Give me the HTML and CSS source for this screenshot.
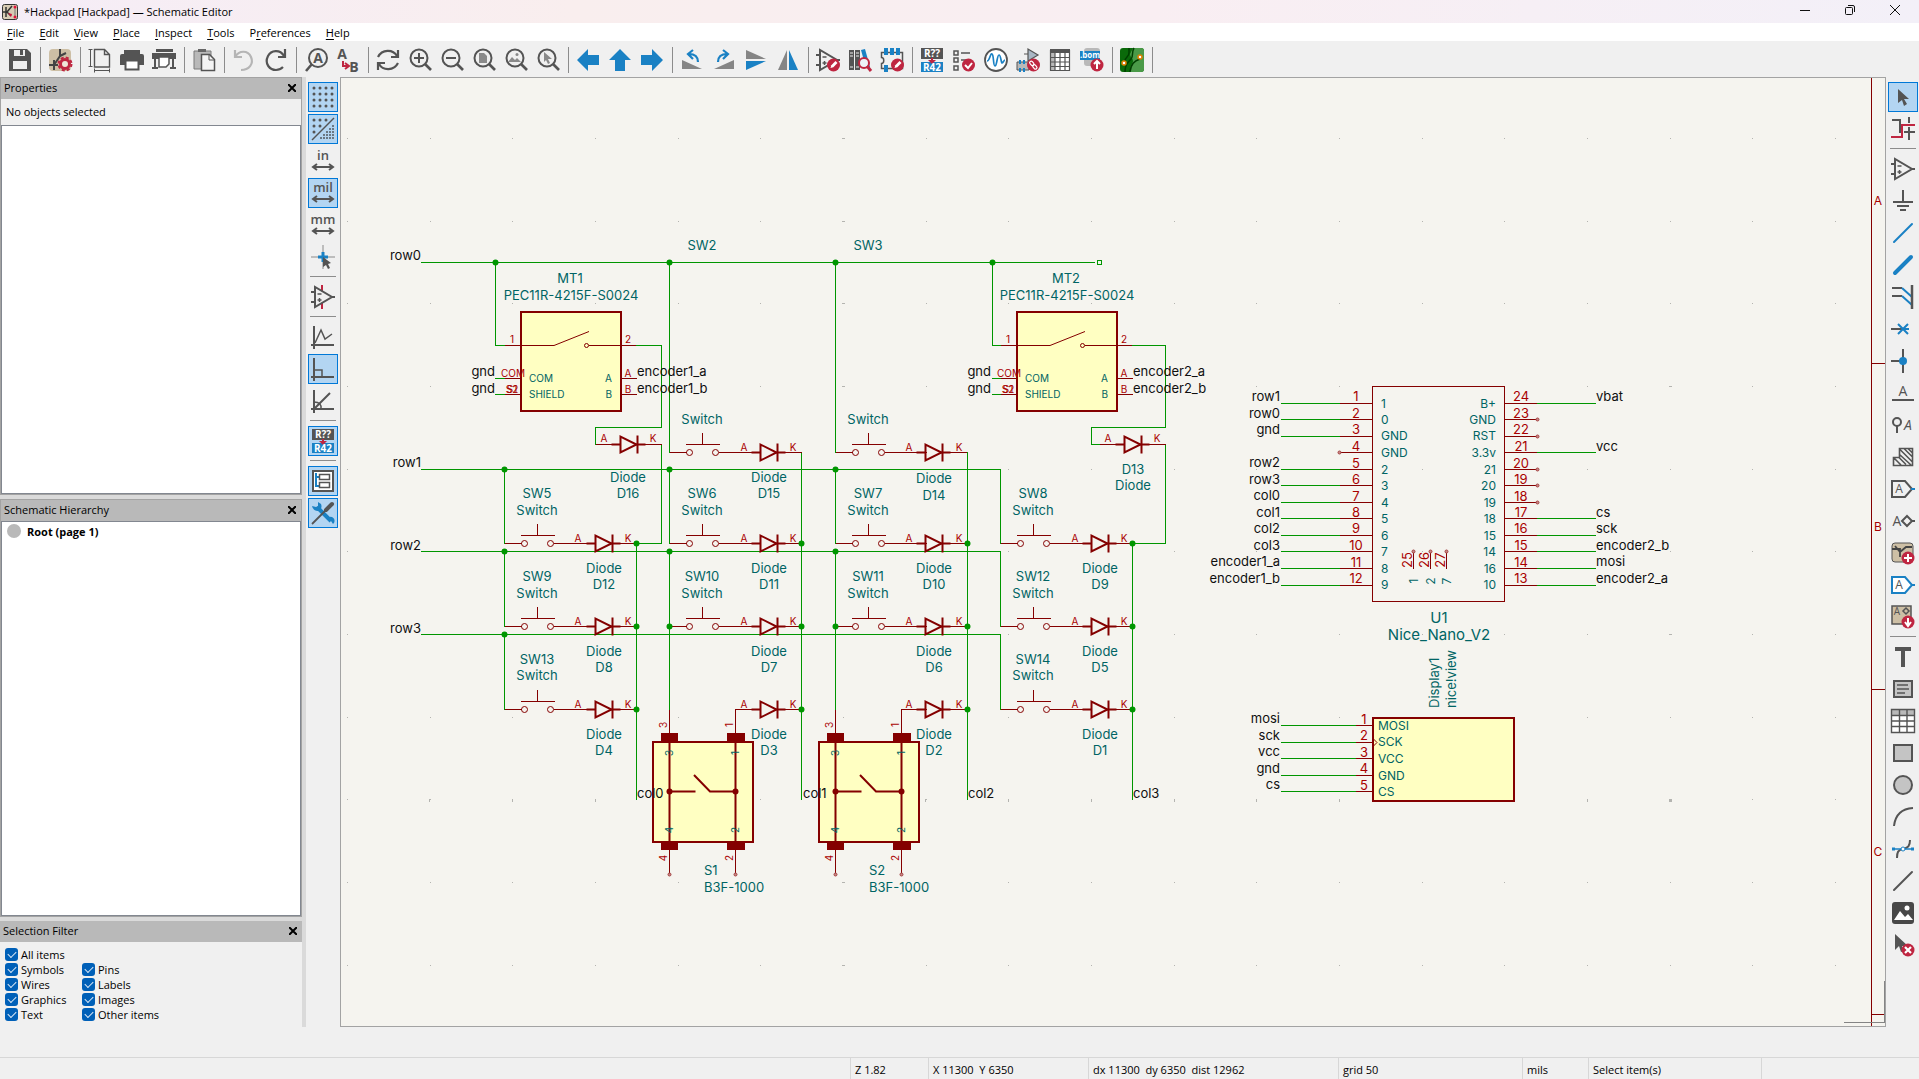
FILE: index.html
```html
<!DOCTYPE html>
<html lang="en">
<head>
<meta charset="utf-8">
<title>*Hackpad [Hackpad] — Schematic Editor</title>
<link rel="stylesheet" href="styles.css">
</head>
<body>
<svg class="defs" aria-hidden="true">
  <defs>
    <symbol id="lens" viewBox="0 0 24 24"><circle cx="11" cy="10" r="8.5" fill="none" stroke="#545454" stroke-width="2"/><path d="M17 16l6 6" stroke="#545454" stroke-width="2.6"/></symbol>
    <symbol id="annotate" viewBox="0 0 24 24"><path fill="#545454" d="M1 0h22v11H1z"/><path fill="#1a81c4" d="M1 14h22v10H1z"/><path fill="#bf2641" d="M11 10h2v2h3l-4 4-4-4h3z"/></symbol>
    <symbol id="opamp" viewBox="0 0 24 24"><path d="M4 2v20l17-10zM0 7h4M0 17h4M21 12h3" fill="none" stroke="#545454" stroke-width="2"/><path d="M6.500 9h4M6.500 15h4M8.500 13v4" stroke="#545454" stroke-width="1.500"/></symbol>
    <symbol id="pencil" viewBox="0 0 24 24"><circle cx="17.500" cy="17" r="6.500" fill="#bf2641"/><path d="M14.500 20l.8-2.800 4.200-4.200 2 2-4.200 4.200z" fill="#fff"/></symbol>
    <g id="switch"><path d="M0 0h17M49 0h42M16-8h34M33-20v12" class="thin"/><circle cx="20" cy="0" r="3" class="round"/><circle cx="46" cy="0" r="3" class="round"/></g>
    <g id="diode"><path d="M-25 0h17M23 0h18" class="thin"/><path d="M-9 0h9M17 0h8M0-8v16l16-8zM17-9v18" class="thick"/></g>
    <g id="encoder">
      <rect x="521" y="312" width="100" height="99" class="body"/>
      <path d="M505 345.500h49M589 345.500h47M505 378.500h15M505 394.500h15M621 378.500h16M621 394.500h16" class="thin"/>
      <path d="M554 345.500l35-14" class="round"/><circle cx="586.500" cy="345.500" r="2" class="round"/>
    </g>
    <g id="tact">
      <rect x="653" y="742" width="100" height="100" class="body"/>
      <path d="M661 733h17v9h-17zM727 733h18v9h-18zM661 842h17v8h-17zM727 842h18v8h-18z" fill="#840000"/>
      <path d="M669.500 742v108M735.500 742v108M669.500 791.500h26M694 775l16 16.500h25" class="thick"/>
      <path d="M669.500 710v23M735.500 709v24M735.500 709.500h25M669.500 850v24M735.500 850v24" class="thin"/>
      <circle cx="669.500" cy="791.500" r="3" fill="#840000"/><circle cx="735.500" cy="791.500" r="3" fill="#840000"/>
      <circle cx="669.500" cy="874.500" r="1.500" class="nc"/><circle cx="735.500" cy="874.500" r="1.500" class="nc"/>
    </g>
    <pattern id="grid" x="347" y="138" width="248" height="248" patternUnits="userSpaceOnUse">
      <path fill="#b4b4b0" d="M0 0h1v1h-1zM83 0h1v1h-1zM165 0h1v1h-1zM0 83h1v1h-1zM83 83h1v1h-1zM165 83h1v1h-1zM0 165h1v1h-1zM83 165h1v1h-1zM165 165h1v1h-1z"/>
    </pattern>
  </defs>
</svg>

<header class="titlebar">
  <svg class="app-icon" viewBox="0 0 16 16"><rect x=".5" y=".5" width="15" height="15" rx="2" fill="#d8cbb5" stroke="#333"/><path d="M4 3v10M1 8h3M10 2L5 8l4 4" stroke="#333" stroke-width="1.500" fill="none"/><path d="M6 9l4 1-1 3z" fill="#d0103a"/><path d="M13 4v8" stroke="#777"/><circle cx="13" cy="3" r="1.500" fill="#e0103a"/><circle cx="13" cy="13" r="1.500" fill="#e0103a"/></svg>
  <h1>*Hackpad [Hackpad] — Schematic Editor</h1>
  <div class="window-buttons">
    <button aria-label="Minimize"><svg viewBox="0 0 12 12"><path d="M1 6.500h10"/></svg></button>
    <button aria-label="Restore"><svg viewBox="0 0 12 12"><rect x="1.500" y="3.500" width="7" height="7" rx="1"/><path d="M4 1.500h5a1.500 1.500 0 0 1 1.500 1.500v5"/></svg></button>
    <button aria-label="Close"><svg viewBox="0 0 12 12"><path d="M1 1l10 10M11 1L1 11"/></svg></button>
  </div>
</header>

<nav class="menubar">
  <button><u>F</u>ile</button><button><u>E</u>dit</button><button><u>V</u>iew</button><button><u>P</u>lace</button><button><u>I</u>nspect</button><button><u>T</u>ools</button><button>P<u>r</u>eferences</button><button><u>H</u>elp</button>
</nav>

<div class="toolbar">
  <button aria-label="Save"><svg viewBox="0 0 24 24"><path d="M1 1h18l4 4v18H1z" fill="#545454"/><path d="M6 2h11v6H6zM5 13h14v8H5z" fill="#efefef"/><path d="M12 2h3v5h-3z" fill="#545454"/></svg></button>
  <hr>
  <button aria-label="Schematic setup"><svg viewBox="0 0 24 24"><rect x="1" y="1" width="22" height="22" rx="4" fill="#cdbfa5"/><path d="M1 17h9M6 12v10M12 1v7M12 8l-6 9M12 8l6-3" stroke="#444" stroke-width="2"/><circle cx="17" cy="16" r="4.500" fill="#efe6d8" stroke="#bf2641" stroke-width="3"/><circle cx="17" cy="16" r="6.500" fill="none" stroke="#bf2641" stroke-width="2" stroke-dasharray="3 2.100"/></svg></button>
  <hr>
  <button aria-label="Page settings"><svg viewBox="0 0 24 24" fill="none" stroke="#545454"><path d="M6.500 1.500h10l5 5v12.500h-15zM16.500 1.500v5h5" stroke-width="1.400"/><path d="M2.500 1v18M.5 1.500h4M.5 18.500h4M6 22.500h16M6.500 20.500v4M21.500 20.500v4"/></svg></button>
  <button aria-label="Print"><svg viewBox="0 0 24 24"><path d="M4 2h16v4H4zM0 8q0-2 2-2h20q2 0 2 2v9H0z" fill="#545454"/><path d="M5.500 12.500h13v9h-13z" fill="#fff" stroke="#545454" stroke-width="2"/></svg></button>
  <button aria-label="Plot"><svg viewBox="0 0 24 24"><path d="M4 1h17v3H4zM0 5h24v6H0zM2 11h2v9H2zM20 11h2v9h-2z" fill="#545454"/><path d="M7 9v10h7l3-3V9z" fill="#fff" stroke="#545454" stroke-width="1.500"/><path d="M0 20h6M18 20h6" stroke="#545454" stroke-width="2"/></svg></button>
  <hr>
  <button aria-label="Paste"><svg viewBox="0 0 24 24"><path d="M2 3h17v18H2z" fill="#b9b9b9" stroke="#7a7a7a"/><path d="M6 1h8v3H6z" fill="#666"/><path d="M9.500 6.500h8l5 5v11h-13z" fill="#f4f4f4" stroke="#545454" stroke-width="1.500"/><path d="M17 7v5h5" fill="none" stroke="#545454"/></svg></button>
  <hr>
  <button aria-label="Undo"><svg viewBox="0 0 24 24" fill="none" stroke="#b5b5b5" stroke-width="2.200"><path d="M3 2v7h7M3 9c4-7 13-7 16 0 3 7-2 13-10 13"/></svg></button>
  <button aria-label="Redo"><svg viewBox="0 0 24 24" fill="none" stroke="#545454" stroke-width="2.200"><path d="M21 1v8h-7M20 8C16 1 7 2 4 8c-4 8 2 14 8 14 3 0 5-1 7-3"/></svg></button>
  <hr>
  <button aria-label="Find"><svg viewBox="0 0 24 24"><circle cx="14" cy="10" r="9" fill="none" stroke="#545454" stroke-width="2"/><path d="M8 16l-6 7" stroke="#545454" stroke-width="2.600"/><text x="14" y="15" class="ic-text b">A</text></svg></button>
  <button aria-label="Find and replace"><svg viewBox="0 0 24 24"><text x="6" y="11" class="ic-text b">A</text><text x="18" y="24" class="ic-text b">B</text><path d="M7 13v5h5M9 15l4 3-4 3" fill="none" stroke="#bf2641" stroke-width="2"/></svg></button>
  <hr>
  <button aria-label="Refresh"><svg viewBox="0 0 24 24" fill="none" stroke="#545454" stroke-width="2.200"><path d="M2 9C6 1 17 1 21 8M22 2v7h-7M22 15c-4 8-15 8-19 1M2 22v-7h7"/></svg></button>
  <button aria-label="Zoom in"><svg viewBox="0 0 24 24"><use href="#lens"/><path d="M6 10h10M11 5v10" stroke="#545454" stroke-width="2"/></svg></button>
  <button aria-label="Zoom out"><svg viewBox="0 0 24 24"><use href="#lens"/><path d="M6 10h10" stroke="#545454" stroke-width="2"/></svg></button>
  <button aria-label="Zoom to fit"><svg viewBox="0 0 24 24"><use href="#lens"/><path d="M7 5h5l3 3v7H7z" fill="#8a8a8a"/></svg></button>
  <button aria-label="Zoom to objects"><svg viewBox="0 0 24 24"><use href="#lens"/><path d="M4 14l4-5 3 3 2-2 4 4z" fill="#8a8a8a"/><circle cx="13" cy="6.500" r="1.500" fill="#8a8a8a"/></svg></button>
  <button aria-label="Zoom to selection"><svg viewBox="0 0 24 24"><use href="#lens"/><path d="M8 4l8 7h-4l2 4-2 1-2-4-2 2z" fill="#8a8a8a"/></svg></button>
  <hr>
  <button aria-label="Navigate back"><svg viewBox="0 0 24 24"><path d="M1 12L12 1v6h11v10H12v6z" fill="#1a81c4"/></svg></button>
  <button aria-label="Navigate up"><svg viewBox="0 0 24 24"><path d="M12 1L1 12h6v11h10V12h6z" fill="#1a81c4"/></svg></button>
  <button aria-label="Navigate forward"><svg viewBox="0 0 24 24"><path d="M23 12L12 1v6H1v10h11v6z" fill="#1a81c4"/></svg></button>
  <hr>
  <button aria-label="Rotate counterclockwise"><svg viewBox="0 0 24 24"><path d="M2 12l20 9H2z" fill="#858585"/><path d="M18 14c0-5-3-8-9-8M13 2L8 6l5 5" fill="none" stroke="#1a81c4" stroke-width="2.200"/></svg></button>
  <button aria-label="Rotate clockwise"><svg viewBox="0 0 24 24"><path d="M22 12L2 21h20z" fill="#858585"/><path d="M6 14c0-5 3-8 9-8M11 2l5 4-5 5" fill="none" stroke="#1a81c4" stroke-width="2.200"/></svg></button>
  <button aria-label="Mirror vertically"><svg viewBox="0 0 24 24"><path d="M2 2v9h20z" fill="#858585"/><path d="M2 22v-9h20z" fill="#1a81c4"/></svg></button>
  <button aria-label="Mirror horizontally"><svg viewBox="0 0 24 24"><path d="M2 22h9V2z" fill="#858585"/><path d="M22 22h-9V2z" fill="#1a81c4"/></svg></button>
  <hr>
  <button aria-label="Symbol editor"><svg viewBox="0 0 24 24"><use href="#opamp"/><use href="#pencil"/></svg></button>
  <button aria-label="Symbol library browser"><svg viewBox="0 0 24 24"><path d="M1 2h5v20H1zM7 2h5v20H7z" fill="#545454"/><path d="M2 5h3M2 8h3M8 5h3M8 8h3M2 19h3M8 19h3" stroke="#eee"/><path d="M13 2l4-1 5 18-4 1z" fill="#1a81c4"/><circle cx="16" cy="15" r="5" fill="#eef3f8" stroke="#bf2641" stroke-width="2"/><path d="M19 18l4 5" stroke="#bf2641" stroke-width="3"/></svg></button>
  <button aria-label="Footprint editor"><svg viewBox="0 0 24 24"><path d="M1.500 4.500h21v16h-21v-5c3 0 3-6 0-6z" fill="none" stroke="#545454" stroke-width="1.500"/><path d="M4 0h4v7H4zM10 0h4v7h-4zM16 0h4v7h-4zM4 17h4v7H4z" fill="#1a81c4"/><use href="#pencil"/></svg></button>
  <hr>
  <button aria-label="Annotate"><svg viewBox="0 0 24 24"><use href="#annotate"/><text x="12" y="9" class="ic-text w">R??</text><text x="12" y="23" class="ic-text w">R42</text></svg></button>
  <button aria-label="Electrical rules checker"><svg viewBox="0 0 24 24"><path d="M2 3h4v4H2zM2 10h4v4H2zM2 18h4v4H2zM9 5h9M9 12h6" fill="none" stroke="#545454" stroke-width="1.500"/><circle cx="16.500" cy="17" r="6.500" fill="#bf2641"/><path d="M13 17l3 3 4-5" fill="none" stroke="#fff" stroke-width="2"/></svg></button>
  <button aria-label="Simulator"><svg viewBox="0 0 24 24"><circle cx="12" cy="12" r="11" fill="#fff" stroke="#545454" stroke-width="1.800"/><path d="M3 13c3 0 3-8 5-7s1 12 3 12 2-11 4-11 2 8 3 8 2-3 3-3" fill="none" stroke="#1a81c4" stroke-width="1.700"/></svg></button>
  <button aria-label="Assign footprints"><svg viewBox="0 0 24 24"><path d="M8 6h4M12 1v12l10-6z" fill="#a9b7c4" stroke="#545454" stroke-width="1.200"/><path d="M1 14h12v8H1z" fill="#b9b9b9" stroke="#545454"/><path d="M3 12h2v4H3zM7 12h2v4H7zM3 20h2v4H3zM7 20h2v4H7z" fill="#1a81c4"/><circle cx="17.500" cy="17" r="6.500" fill="#bf2641"/><rect x="-2" y="-1.500" width="5" height="3" rx="1.500" transform="translate(15.500 15) rotate(50)" fill="none" stroke="#fff" stroke-width="1.200"/><rect x="-2" y="-1.500" width="5" height="3" rx="1.500" transform="translate(18.500 18.500) rotate(50)" fill="none" stroke="#fff" stroke-width="1.200"/></svg></button>
  <button aria-label="Symbol fields table"><svg viewBox="0 0 24 24"><path d="M2 1h20v22H2z" fill="#fff"/><path d="M2 5h5v18H2z" fill="#b9b9b9"/><path d="M2 1h20v4H2z" fill="#545454"/><path d="M2.500 2v20.500h19V2M2 9.500h20M2 14h20M2 18.500h20M7 5v18M12 5v18M17 5v18" fill="none" stroke="#545454" stroke-width="1.200"/></svg></button>
  <button aria-label="Bill of materials"><svg viewBox="0 0 24 24"><rect x="4" y="0" width="16" height="18" rx="3" fill="#b9b9b9"/><path d="M0 3h20v9H0z" fill="#1a81c4"/><text x="10" y="10" class="ic-text v">.bom</text><circle cx="17" cy="17" r="6.500" fill="#bf2641"/><path d="M17 21v-7M14 16l3-3 3 3" fill="none" stroke="#fff" stroke-width="2"/></svg></button>
  <hr>
  <button aria-label="PCB editor"><svg viewBox="0 0 24 24"><rect width="24" height="24" rx="3" fill="#0a6a0a"/><path d="M13 0h8q3 0 3 3v18q0 3-3 3H10c0-8 3-8 3-11s-3-4-3-7z" fill="#4a9a48"/><path d="M9 0v5c0 4-4 4-4 8M14 0c-3 5 0 7-3 11s-6 5-6 13M20 11c-6 2-9 5-10 13" fill="none" stroke="#003f00" stroke-width="1.500"/><circle cx="4" cy="15" r="2" fill="#fff" stroke="#e08000" stroke-width="1.500"/><circle cx="20" cy="9" r="2" fill="#fff" stroke="#e08000" stroke-width="1.500"/></svg></button>
  <hr>
</div>

<main class="workspace">
  <div class="docks">
    <section class="dock">
      <div class="dock-head"><h2>Properties</h2><button aria-label="Close Properties"><svg viewBox="0 0 8 8"><path d="M0 0l8 8M8 0L0 8"/></svg></button></div>
      <p class="note">No objects selected</p>
      <div class="list"></div>
    </section>
    <section class="dock">
      <div class="dock-head"><h2>Schematic Hierarchy</h2><button aria-label="Close Schematic Hierarchy"><svg viewBox="0 0 8 8"><path d="M0 0l8 8M8 0L0 8"/></svg></button></div>
      <ul class="list"><li>Root (page 1)</li></ul>
    </section>
    <section class="dock filter">
      <div class="dock-head"><h2>Selection Filter</h2><button aria-label="Close Selection Filter"><svg viewBox="0 0 8 8"><path d="M0 0l8 8M8 0L0 8"/></svg></button></div>
      <div class="checks">
        <label class="wide"><input type="checkbox" checked>All items</label>
        <label><input type="checkbox" checked>Symbols</label><label><input type="checkbox" checked>Pins</label>
        <label><input type="checkbox" checked>Wires</label><label><input type="checkbox" checked>Labels</label>
        <label><input type="checkbox" checked>Graphics</label><label><input type="checkbox" checked>Images</label>
        <label><input type="checkbox" checked>Text</label><label><input type="checkbox" checked>Other items</label>
      </div>
    </section>
  </div>

  <div class="side left">
    <button class="on" aria-label="Show grid"><svg viewBox="0 0 24 24"><path class="dots" d="M3 3h0M9 3h0M15 3h0M21 3h0M3 9h0M9 9h0M15 9h0M21 9h0M3 15h0M9 15h0M15 15h0M21 15h0M3 21h0M9 21h0M15 21h0M21 21h0"/></svg></button>
    <button class="on" aria-label="Grid overrides"><svg viewBox="0 0 24 24"><path class="dots" d="M3 3h0M9 3h0M15 3h0M3 9h0M9 9h0M3 15h0"/><path d="M1 23L23 1" stroke="#545454" stroke-width="1.500"/><path d="M22 8v15M19 11v12M16 14v9M13 17v6M10 20v3" stroke="#6a7884" stroke-width="2" stroke-dasharray="2 1"/></svg></button>
    <button aria-label="Inches"><svg viewBox="0 0 24 24"><text x="12" y="11" class="ic-text u">in</text><path class="span" d="M3 18h18M6 15l-4 3 4 3M18 15l4 3-4 3"/></svg></button>
    <button class="on" aria-label="Mils"><svg viewBox="0 0 24 24"><text x="12" y="11" class="ic-text u">mil</text><path class="span" d="M3 18h18M6 15l-4 3 4 3M18 15l4 3-4 3"/></svg></button>
    <button aria-label="Millimeters"><svg viewBox="0 0 24 24"><text x="12" y="11" class="ic-text u">mm</text><path class="span" d="M3 18h18M6 15l-4 3 4 3M18 15l4 3-4 3"/></svg></button>
    <button aria-label="Full-window crosshairs"><svg viewBox="0 0 24 24"><path d="M0 12h24M12 0v24" stroke="#8a8a8a"/><path d="M7 12h10M12 7v10" stroke="#1a81c4" stroke-width="3"/><path d="M12 12l8 6-3 1 2 4-2 1-2-4-3 2z" fill="#545454"/></svg></button>
    <hr>
    <button aria-label="Hidden pins"><svg viewBox="0 0 24 24"><path d="M11 0v6M11 18v6" stroke="#bf2641" stroke-width="2"/><use href="#opamp"/></svg></button>
    <hr>
    <button aria-label="Free angle wires"><svg viewBox="0 0 24 24"><path class="axes" d="M3 1v23M0 20h23"/><path d="M4 18L10 5l4 9 7-5" fill="none" stroke="#545454" stroke-width="1.500"/></svg></button>
    <button class="on" aria-label="90 degree wires"><svg viewBox="0 0 24 24"><path class="axes" d="M3 1v23M0 20h23"/><path d="M3 13h8v7" fill="none" stroke="#545454" stroke-width="1.500"/></svg></button>
    <button aria-label="45 degree wires"><svg viewBox="0 0 24 24"><path class="axes" d="M3 1v23M0 20h23M3 20L19 4"/><path d="M3 13q8 0 7 7" fill="none" stroke="#545454" stroke-width="1.500"/></svg></button>
    <hr>
    <button class="on" aria-label="Annotate automatically"><svg viewBox="0 0 24 24"><use href="#annotate"/><text x="12" y="9" class="ic-text w">R??</text><text x="12" y="23" class="ic-text w">R42</text></svg></button>
    <hr>
    <button class="on" aria-label="Hierarchy navigator"><svg viewBox="0 0 24 24"><path d="M2 2h20v20H2z" fill="#fff" stroke="#545454" stroke-width="2"/><path d="M5 4v13h4M5 8h4" fill="none" stroke="#1a81c4" stroke-width="2"/><path d="M8.500 5.500h10v5h-10zM8.500 13.500h10v5h-10z" fill="#fff" stroke="#545454" stroke-width="1.500"/></svg></button>
    <button class="on" aria-label="Properties manager"><svg viewBox="0 0 24 24"><path d="M6 6l14 14" stroke="#1a81c4" stroke-width="4"/><path d="M1 5a6 6 0 0 0 7 5 6 6 0 0 0 2-7L7 1v4L5 6zM16 18a4 4 0 1 1 6 5l-2-3z" fill="#1a81c4"/><path d="M1 23L15 9" stroke="#545454" stroke-width="1.800"/><path d="M15 9l6-6" stroke="#545454" stroke-width="4" stroke-linecap="round"/></svg></button>
  </div>

  <div class="canvas">
    <svg class="sheet" viewBox="341 78 1544 948" preserveAspectRatio="xMidYMid slice">
      <rect x="341" y="130" width="1500" height="845" fill="url(#grid)"/>
      <path fill="#b4b4b0" d="M842 138h3v1h-3zM842 221h3v1h-3zM842 303h3v1h-3zM842 386h3v1h-3zM842 882h3v1h-3zM842 965h3v1h-3zM429 799h1v3h-1zM512 799h1v3h-1zM595 799h1v3h-1zM925 799h1v3h-1zM1008 799h1v3h-1zM1091 799h1v3h-1zM1174 799h1v3h-1zM1256 799h1v3h-1zM1339 799h1v3h-1zM1587 799h1v3h-1zM1669 799h3v3h-3zM1669 386h3v1h-3zM1669 634h3v1h-3z"/>
      <path class="thin" d="M1871.500 78v948M1871 363.500h14M1871 689.500h14M1871 1014.500h14"/>
      <path class="page" d="M1884.500 981v41M1844 1022.500h41"/>
      <g class="num mid sz12"><text x="1878" y="205">A</text><text x="1878" y="531">B</text><text x="1878" y="856">C</text></g>

      <path class="wire" d="M421 262.500h674M421 469.500h579.500v74M421 551.500h579.500v75M421 634.500h579.500v75M504.500 469v75M504.500 551v76M504.500 634v76M669.500 262v191M669.500 469v75M669.500 551v159M835.500 262v191M835.500 469v75M835.500 551v159M636.500 543v257M801.500 452v348M967.500 452v348M1132.500 543v257
        M495.500 262v83.500h10M636 345.500h25.500v82h-66v17M661.500 444v99.500h-25M495 378.500h10M495 394.500h10
        M992.500 262v83.500h9M1132 345.500h33.500v82h-74v17h9M1165.500 444v99.500h-33M992 378.500h9M992 394.500h9
        M1281 403.500h59M1281 419.500h59M1281 436.500h59M1281 469.500h59M1281 485.500h59M1281 502.500h59M1281 518.500h59M1281 535.500h59M1281 551.500h59M1281 568.500h59M1281 585.500h59
        M1537 403.500h59M1537 452.500h59M1537 518.500h59M1537 535.500h59M1537 551.500h59M1537 568.500h59M1537 585.500h59
        M1281 725.500h75M1281 742.500h75M1281 758.500h75M1281 775.500h75M1281 791.500h75M1097.500 260.500h4v4h-4z"/>

      <use href="#encoder"/><use href="#encoder" x="496"/>
      <use href="#tact"/><use href="#tact" x="166"/>
      <use href="#switch" x="669.5" y="452.5"/><use href="#switch" x="835.5" y="452.5"/>
      <use href="#switch" x="504.5" y="543.5"/><use href="#switch" x="669.5" y="543.5"/><use href="#switch" x="835.5" y="543.5"/><use href="#switch" x="1000.5" y="543.5"/>
      <use href="#switch" x="504.5" y="626.5"/><use href="#switch" x="669.5" y="626.5"/><use href="#switch" x="835.5" y="626.5"/><use href="#switch" x="1000.5" y="626.5"/>
      <use href="#switch" x="504.5" y="709.5"/><use href="#switch" x="1000.5" y="709.5"/>
      <use href="#diode" x="620.5" y="444.5"/><use href="#diode" x="1124.5" y="444.5"/><use href="#diode" x="760.5" y="452.5"/><use href="#diode" x="925.5" y="452.5"/>
      <use href="#diode" x="595.5" y="543.5"/><use href="#diode" x="760.5" y="543.5"/><use href="#diode" x="925.5" y="543.5"/><use href="#diode" x="1091.5" y="543.5"/>
      <use href="#diode" x="595.5" y="626.5"/><use href="#diode" x="760.5" y="626.5"/><use href="#diode" x="925.5" y="626.5"/><use href="#diode" x="1091.5" y="626.5"/>
      <use href="#diode" x="595.5" y="709.5"/><use href="#diode" x="760.5" y="709.5"/><use href="#diode" x="925.5" y="709.5"/><use href="#diode" x="1091.5" y="709.5"/>

      <path class="junction" d="M495.500 262.500h0M669.500 262.500h0M835.500 262.500h0M992.500 262.500h0M504.500 469.500h0M669.500 469.500h0M835.500 469.500h0M504.500 551.500h0M669.500 551.500h0M835.500 551.500h0M504.500 634.500h0M636.500 543.500h0M801.500 543.500h0M967.500 543.500h0M1132.500 543.500h0M636.500 626.500h0M669.500 626.500h0M801.500 626.500h0M835.500 626.500h0M967.500 626.500h0M1132.500 626.500h0M636.500 709.500h0M801.500 709.500h0M967.500 709.500h0M1132.500 709.500h0"/>

      <rect x="1372.500" y="386.500" width="132" height="215" class="outline"/>
      <path class="thin" d="M1340 403.500h32M1340 419.500h32M1340 436.500h32M1340 452.500h32M1340 469.500h32M1340 485.500h32M1340 502.500h32M1340 518.500h32M1340 535.500h32M1340 551.500h32M1340 568.500h32M1340 585.500h32M1505 403.500h32M1505 419.500h32M1505 436.500h32M1505 452.500h32M1505 469.500h32M1505 485.500h32M1505 502.500h32M1505 518.500h32M1505 535.500h32M1505 551.500h32M1505 568.500h32M1505 585.500h32M1413.500 551v18M1430.500 551v18M1446.500 551v18M1356 725.500h16M1356 742.500h16M1356 758.500h16M1356 775.500h16M1356 791.500h16"/>
      <g class="nc"><circle cx="1339.500" cy="452.500" r="1.500"/><circle cx="1537.500" cy="419.500" r="1.500"/><circle cx="1537.500" cy="436.500" r="1.500"/><circle cx="1537.500" cy="469.500" r="1.500"/><circle cx="1537.500" cy="485.500" r="1.500"/><circle cx="1537.500" cy="502.500" r="1.500"/><circle cx="1413.500" cy="551.500" r="1.500"/><circle cx="1430.500" cy="551.500" r="1.500"/><circle cx="1446.500" cy="551.500" r="1.500"/></g>
      <rect x="1373" y="718" width="141" height="83" class="body"/>
      <path class="round" d="M1373 738.500l4 4-4 4"/>

      <g class="label end">
        <text x="421" y="260">row0</text><text x="421" y="467">row1</text><text x="421" y="550">row2</text><text x="421" y="633">row3</text>
        <text x="495" y="376">gnd</text><text x="495" y="393">gnd</text><text x="991" y="376">gnd</text><text x="991" y="393">gnd</text>
        <text x="1280" y="401">row1</text><text x="1280" y="418">row0</text><text x="1280" y="434">gnd</text><text x="1280" y="467">row2</text><text x="1280" y="484">row3</text><text x="1280" y="500">col0</text><text x="1280" y="517">col1</text><text x="1280" y="533">col2</text><text x="1280" y="550">col3</text><text x="1280" y="566">encoder1_a</text><text x="1280" y="583">encoder1_b</text>
        <text x="1280" y="723">mosi</text><text x="1280" y="740">sck</text><text x="1280" y="756">vcc</text><text x="1280" y="773">gnd</text><text x="1280" y="789">cs</text>
      </g>
      <g class="label">
        <text x="637" y="376">encoder1_a</text><text x="637" y="393">encoder1_b</text><text x="1133" y="376">encoder2_a</text><text x="1133" y="393">encoder2_b</text>
        <text x="637" y="798">col0</text><text x="803" y="798">col1</text><text x="968" y="798">col2</text><text x="1133" y="798">col3</text>
        <text x="1596" y="401">vbat</text><text x="1596" y="451">vcc</text><text x="1596" y="517">cs</text><text x="1596" y="533">sck</text><text x="1596" y="550">encoder2_b</text><text x="1596" y="566">mosi</text><text x="1596" y="583">encoder2_a</text>
      </g>

      <g class="name mid">
        <text x="702" y="250">SW2</text><text x="868" y="250">SW3</text>
        <text x="570" y="283">MT1</text><text x="571" y="300">PEC11R-4215F-S0024</text><text x="1066" y="283">MT2</text><text x="1067" y="300">PEC11R-4215F-S0024</text>
        <text x="702" y="424">Switch</text><text x="868" y="424">Switch</text>
        <text x="628" y="482">Diode</text><text x="628" y="498">D16</text><text x="769" y="482">Diode</text><text x="769" y="498">D15</text><text x="934" y="483">Diode</text><text x="934" y="500">D14</text><text x="1133" y="474">D13</text><text x="1133" y="490">Diode</text>
        <text x="537" y="498">SW5</text><text x="537" y="515">Switch</text><text x="702" y="498">SW6</text><text x="702" y="515">Switch</text><text x="868" y="498">SW7</text><text x="868" y="515">Switch</text><text x="1033" y="498">SW8</text><text x="1033" y="515">Switch</text>
        <text x="604" y="573">Diode</text><text x="604" y="589">D12</text><text x="769" y="573">Diode</text><text x="769" y="589">D11</text><text x="934" y="573">Diode</text><text x="934" y="589">D10</text><text x="1100" y="573">Diode</text><text x="1100" y="589">D9</text>
        <text x="537" y="581">SW9</text><text x="537" y="598">Switch</text><text x="702" y="581">SW10</text><text x="702" y="598">Switch</text><text x="868" y="581">SW11</text><text x="868" y="598">Switch</text><text x="1033" y="581">SW12</text><text x="1033" y="598">Switch</text>
        <text x="604" y="656">Diode</text><text x="604" y="672">D8</text><text x="769" y="656">Diode</text><text x="769" y="672">D7</text><text x="934" y="656">Diode</text><text x="934" y="672">D6</text><text x="1100" y="656">Diode</text><text x="1100" y="672">D5</text>
        <text x="537" y="664">SW13</text><text x="537" y="680">Switch</text><text x="1033" y="664">SW14</text><text x="1033" y="680">Switch</text>
        <text x="604" y="739">Diode</text><text x="604" y="755">D4</text><text x="769" y="739">Diode</text><text x="769" y="755">D3</text><text x="934" y="739">Diode</text><text x="934" y="755">D2</text><text x="1100" y="739">Diode</text><text x="1100" y="755">D1</text>
        <text x="1439" y="623" class="sz15">U1</text><text x="1439" y="640" class="sz15">Nice_Nano_V2</text>
      </g>
      <g class="name">
        <text x="704" y="875">S1</text><text x="704" y="892">B3F-1000</text><text x="869" y="875">S2</text><text x="869" y="892">B3F-1000</text>
        <text transform="translate(1439 708) rotate(-90)">Display1</text><text transform="translate(1456 708) rotate(-90)">nice!view</text>
      </g>
      <g class="name sz12">
        <text x="1381" y="408">1</text><text x="1381" y="424">0</text><text x="1381" y="440">GND</text><text x="1381" y="457">GND</text><text x="1381" y="474">2</text><text x="1381" y="490">3</text><text x="1381" y="507">4</text><text x="1381" y="523">5</text><text x="1381" y="540">6</text><text x="1381" y="556">7</text><text x="1381" y="573">8</text><text x="1381" y="589">9</text>
        <text x="1378" y="730">MOSI</text><text x="1378" y="746">SCK</text><text x="1378" y="763">VCC</text><text x="1378" y="780">GND</text><text x="1378" y="796">CS</text>
      </g>
      <g class="name sz12 end">
        <text x="1496" y="408">B+</text><text x="1496" y="424">GND</text><text x="1496" y="440">RST</text><text x="1496" y="457">3.3v</text><text x="1496" y="474">21</text><text x="1496" y="490">20</text><text x="1496" y="507">19</text><text x="1496" y="523">18</text><text x="1496" y="540">15</text><text x="1496" y="556">14</text><text x="1496" y="573">16</text><text x="1496" y="589">10</text>
      </g>
      <g class="name sz12 mid"><text transform="translate(1418 581) rotate(-90)">1</text><text transform="translate(1435 581) rotate(-90)">2</text><text transform="translate(1451 581) rotate(-90)">7</text></g>
      <g class="name sz10"><text x="529" y="382">COM</text><text x="529" y="398">SHIELD</text><text x="1025" y="382">COM</text><text x="1025" y="398">SHIELD</text></g>
      <g class="name sz10 end"><text x="612" y="382">A</text><text x="612" y="398">B</text><text x="1108" y="382">A</text><text x="1108" y="398">B</text></g>
      <g class="name sz10 mid">
        <text transform="translate(673 753) rotate(-90)">3</text><text transform="translate(739 753) rotate(-90)">1</text><text transform="translate(673 830) rotate(-90)">4</text><text transform="translate(739 830) rotate(-90)">2</text>
        <text transform="translate(839 753) rotate(-90)">3</text><text transform="translate(905 753) rotate(-90)">1</text><text transform="translate(839 830) rotate(-90)">4</text><text transform="translate(905 830) rotate(-90)">2</text>
      </g>
      <g class="num mid">
        <text x="1356" y="401">1</text><text x="1356" y="418">2</text><text x="1356" y="434">3</text><text x="1356" y="451">4</text><text x="1356" y="468">5</text><text x="1356" y="484">6</text><text x="1356" y="501">7</text><text x="1356" y="517">8</text><text x="1356" y="533">9</text><text x="1356" y="550">10</text><text x="1356" y="567">11</text><text x="1356" y="583">12</text>
        <text x="1521" y="401">24</text><text x="1521" y="418">23</text><text x="1521" y="434">22</text><text x="1521" y="451">21</text><text x="1521" y="468">20</text><text x="1521" y="484">19</text><text x="1521" y="501">18</text><text x="1521" y="517">17</text><text x="1521" y="533">16</text><text x="1521" y="550">15</text><text x="1521" y="567">14</text><text x="1521" y="583">13</text>
        <text transform="translate(1412 560) rotate(-90)">25</text><text transform="translate(1429 560) rotate(-90)">26</text><text transform="translate(1445 560) rotate(-90)">27</text>
        <text x="1364" y="724">1</text><text x="1364" y="740">2</text><text x="1364" y="757">3</text><text x="1364" y="773">4</text><text x="1364" y="790">5</text>
      </g>
      <g class="num mid sz10">
        <text x="512" y="343">1</text><text x="628" y="343">2</text><text x="513" y="377">COM</text><text x="512" y="393">S1</text><text x="512" y="393">S2</text><text x="628" y="377">A</text><text x="628" y="393">B</text>
        <text x="1008" y="343">1</text><text x="1124" y="343">2</text><text x="1009" y="377">COM</text><text x="1008" y="393">S1</text><text x="1008" y="393">S2</text><text x="1124" y="377">A</text><text x="1124" y="393">B</text>
        <text x="604" y="442">A</text><text x="653" y="442">K</text><text x="1108" y="442">A</text><text x="1157" y="442">K</text><text x="744" y="451">A</text><text x="793" y="451">K</text><text x="909" y="451">A</text><text x="959" y="451">K</text>
        <text x="578" y="542">A</text><text x="628" y="542">K</text><text x="744" y="542">A</text><text x="793" y="542">K</text><text x="909" y="542">A</text><text x="959" y="542">K</text><text x="1075" y="542">A</text><text x="1124" y="542">K</text>
        <text x="578" y="625">A</text><text x="628" y="625">K</text><text x="744" y="625">A</text><text x="793" y="625">K</text><text x="909" y="625">A</text><text x="959" y="625">K</text><text x="1075" y="625">A</text><text x="1124" y="625">K</text>
        <text x="578" y="708">A</text><text x="628" y="708">K</text><text x="744" y="708">A</text><text x="793" y="708">K</text><text x="909" y="708">A</text><text x="959" y="708">K</text><text x="1075" y="708">A</text><text x="1124" y="708">K</text>
        <text transform="translate(667 725) rotate(-90)">3</text><text transform="translate(733 725) rotate(-90)">1</text><text transform="translate(667 858) rotate(-90)">4</text><text transform="translate(733 858) rotate(-90)">2</text>
        <text transform="translate(833 725) rotate(-90)">3</text><text transform="translate(899 725) rotate(-90)">1</text><text transform="translate(833 858) rotate(-90)">4</text><text transform="translate(899 858) rotate(-90)">2</text>
      </g>
    </svg>
  </div>

  <div class="side right">
    <button class="on" aria-label="Select"><svg viewBox="0 0 24 24"><path d="M7 4l11 10h-5l3 5-3 2-2-6-4 3z" fill="#545454"/></svg></button>
    <button aria-label="Highlight net"><svg viewBox="0 0 24 24" fill="none"><path d="M1 3h8v13M18 0v6M18 10v13M13 15h11" stroke="#545454" stroke-width="2"/><path d="M0 20h11V8h13" stroke="#bf2641" stroke-width="2"/></svg></button>
    <hr>
    <button aria-label="Place symbols"><svg viewBox="0 0 24 24"><use href="#opamp"/></svg></button>
    <button aria-label="Place power symbols"><svg viewBox="0 0 24 24" stroke="#545454" stroke-width="2"><path d="M12 1v12M2 13h20M6 17h12M9 21h6"/></svg></button>
    <button aria-label="Draw wires"><svg viewBox="0 0 24 24"><path d="M3 21L21 3" stroke="#1a81c4" stroke-width="2" stroke-linecap="round"/></svg></button>
    <button aria-label="Draw buses"><svg viewBox="0 0 24 24"><path d="M4 20L20 4" stroke="#1a81c4" stroke-width="4" stroke-linecap="round"/></svg></button>
    <button aria-label="Wire to bus entry"><svg viewBox="0 0 24 24"><path d="M1 3h10M1 11h10" stroke="#545454" stroke-width="2"/><path d="M11 3l10 9M11 11l10 9" stroke="#1a81c4" stroke-width="2"/><path d="M21 0v24" stroke="#545454" stroke-width="2.500"/></svg></button>
    <button aria-label="No-connect flag"><svg viewBox="0 0 24 24"><path d="M0 12h12" stroke="#545454" stroke-width="2"/><path d="M7 7l10 10M17 7L7 17M12 12h6" stroke="#1a81c4" stroke-width="2"/></svg></button>
    <button aria-label="Junction"><svg viewBox="0 0 24 24"><path d="M0 12h12M12 0v24" stroke="#545454" stroke-width="2"/><circle cx="12" cy="12" r="4" fill="#1a81c4"/></svg></button>
    <button aria-label="Net label"><svg viewBox="0 0 24 24"><text x="12" y="15" class="ic-text l">A</text><path d="M1 19h22" stroke="#545454" stroke-width="2"/></svg></button>
    <button aria-label="Net class directive"><svg viewBox="0 0 24 24"><circle cx="6" cy="9" r="4" fill="none" stroke="#545454" stroke-width="2"/><path d="M6 13v7" stroke="#545454" stroke-width="2"/><text x="17" y="17" class="ic-text l i">A</text></svg></button>
    <button aria-label="Rule area"><svg viewBox="0 0 24 24" fill="none" stroke="#545454" stroke-width="1.600"><path d="M8.500 3.500h13v17h-19v-8h6zM8.500 4l13 13M8 9l12 11M13 3.500l8.500 8.500M17 3.500l4 4M3 13l7 7M8 12.500l7 7"/></svg></button>
    <button aria-label="Global label"><svg viewBox="0 0 24 24"><path d="M1 4h13l7 8-7 8H1z" fill="none" stroke="#545454" stroke-width="2"/><path d="M20 12h4" stroke="#1a81c4" stroke-width="2"/><text x="8" y="16" class="ic-text s">A</text></svg></button>
    <button aria-label="Hierarchical label"><svg viewBox="0 0 24 24"><text x="6" y="17" class="ic-text l">A</text><path d="M16 7l5 5-5 5-5-5zM21 12h3" fill="none" stroke="#545454" stroke-width="2"/></svg></button>
    <button aria-label="Hierarchical sheet"><svg viewBox="0 0 24 24"><rect x="1" y="2" width="21" height="19" rx="3" fill="#cdbfa5" stroke="#545454"/><path d="M1 8h8v8M4 5l5 6M9 11l6-5h6" stroke="#444" stroke-width="1.800" fill="none"/><circle cx="17" cy="17" r="6.500" fill="#bf2641"/><path d="M13 17h8M17 13v8" stroke="#fff" stroke-width="2"/></svg></button>
    <button aria-label="Sheet pin"><svg viewBox="0 0 24 24"><path d="M1 4h13l7 8-7 8H1z" fill="#fff" stroke="#1a81c4" stroke-width="2"/><path d="M20 12h4" stroke="#1a81c4" stroke-width="2"/><text x="8" y="16" class="ic-text s">A</text></svg></button>
    <button aria-label="Import sheet pins"><svg viewBox="0 0 24 24"><path d="M1 1h19v18H1z" fill="#cdbfa5" stroke="#545454" stroke-width="1.500"/><text x="6" y="10" class="ic-text x">A</text><path d="M15 3l3 3-3 3-3-3z" fill="none" stroke="#545454" stroke-width="1.500"/><circle cx="17" cy="17" r="6.500" fill="#bf2641"/><path d="M17 13v7M14 17l3 4 3-4" fill="none" stroke="#fff" stroke-width="2"/></svg></button>
    <hr>
    <button aria-label="Text"><svg viewBox="0 0 24 24"><path d="M4 4h16M12 4v18" stroke="#545454" stroke-width="4"/></svg></button>
    <button aria-label="Text box"><svg viewBox="0 0 24 24"><path d="M3 4h18v16H3z" fill="#c4c4c4" stroke="#545454" stroke-width="2"/><path d="M6 8h11M6 12h12M6 16h8" stroke="#545454" stroke-width="1.500"/></svg></button>
    <button aria-label="Table"><svg viewBox="0 0 24 24"><path d="M1 1h22v22H1z" fill="#fff"/><path d="M1 1h22v6H1z" fill="#b9b9b9"/><path d="M.5.5h23v23H.5zM0 6.500h24M0 12h24M0 17.500h24M8.500 0v24M16 0v24" fill="none" stroke="#545454" stroke-width="1.400"/></svg></button>
    <button aria-label="Rectangle"><svg viewBox="0 0 24 24"><path d="M3 4h18v16H3z" fill="#c4c4c4" stroke="#545454" stroke-width="2"/></svg></button>
    <button aria-label="Circle"><svg viewBox="0 0 24 24"><circle cx="12" cy="12" r="9" fill="#c4c4c4" stroke="#545454" stroke-width="2"/></svg></button>
    <button aria-label="Arc"><svg viewBox="0 0 24 24"><path d="M3 21Q5 4 22 3" fill="none" stroke="#545454" stroke-width="2"/></svg></button>
    <button aria-label="Bezier curve"><svg viewBox="0 0 24 24"><path d="M6 21c0-6 1-8 6-9s7-3 7-9" fill="none" stroke="#545454" stroke-width="2"/><path d="M2 12h20" stroke="#1a81c4" stroke-width="1.500"/><path d="M1 10.500h3v3H1zM20 10.500h3v3h-3z" fill="#1a81c4"/><circle cx="12" cy="12" r="2" fill="#fff" stroke="#1a81c4"/></svg></button>
    <button aria-label="Line"><svg viewBox="0 0 24 24"><path d="M3 21L21 3" stroke="#545454" stroke-width="2" stroke-linecap="round"/></svg></button>
    <button aria-label="Image"><svg viewBox="0 0 24 24"><rect x="1" y="1" width="22" height="22" rx="3" fill="#484848"/><path d="M3 19l6-9 5 6 3-3 5 6z" fill="#fff"/><circle cx="16" cy="7" r="2.500" fill="#fff"/></svg></button>
    <button aria-label="Delete"><svg viewBox="0 0 24 24"><path d="M4 1l13 12h-6l2 5-3 1-2-6-4 4z" fill="#545454"/><circle cx="17" cy="17" r="6.500" fill="#bf2641"/><path d="M14 14l6 6M20 14l-6 6" stroke="#fff" stroke-width="2.200"/></svg></button>
  </div>
</main>

<div class="message-panel"></div>
<footer class="statusbar">
  <span></span><span>Z 1.82</span><span>X 11300&nbsp; Y 6350</span><span>dx 11300&nbsp; dy 6350&nbsp; dist 12962</span><span>grid 50</span><span>mils</span><span>Select item(s)</span><span></span>
</footer>
</body>
</html>
```
FILE: styles.css
```css
* { box-sizing: border-box; margin: 0; padding: 0; }

body {
  display: flex;
  flex-direction: column;
  height: 100vh;
  overflow: hidden;
  background: #f0f0f0;
  color: #000;
  font: 11px/15px "Open Sans", "Noto Sans", sans-serif;
}

button { border: 0; background: none; font: inherit; color: inherit; }
h1, h2 { font: inherit; }
.defs { position: absolute; width: 0; height: 0; }

/* Title and menus */
.titlebar {
  display: flex;
  align-items: center;
  height: 23px;
  padding-left: 2px;
  background: linear-gradient(90deg, #f5edf7, #f9eeee 30%, #f9eef2 60%, #f3f0f8);
}
.app-icon { width: 16px; height: 16px; margin-right: 6px; }
.window-buttons { display: flex; align-self: start; margin: 0 2px 0 auto; }
.window-buttons button { display: grid; place-items: center; width: 45px; height: 20px; }
.window-buttons svg { width: 12px; height: 12px; fill: none; stroke: #111; }

.menubar { display: flex; gap: 15px; height: 18px; padding-left: 7px; background: #fff; }
.menubar button { line-height: 20px; }
.menubar u { text-underline-offset: 2px; }

/* Top toolbar */
.toolbar { display: flex; align-items: center; height: 36px; padding: 2px 0 0 4px; }
.toolbar button { display: grid; place-items: center; width: 32px; height: 32px; }
.toolbar svg, .side svg { display: block; width: 24px; height: 24px; overflow: visible; }
.toolbar hr { width: 1px; height: 26px; margin: 0 3px 0 4px; border: 0; background: #8c8c8c; }

/* Main area */
.workspace {
  flex: 1;
  display: grid;
  grid-template-columns: 306px 34px 1fr 33px;
  min-height: 0;
}

.docks {
  display: flex;
  flex-direction: column;
  gap: 4px;
  padding-right: 4px;
  background: #dadada;
}
.dock {
  flex: 1;
  display: flex;
  flex-direction: column;
  border: 1px solid #a3a3a3;
  background: #f0f0f0;
}
.dock-head {
  display: flex;
  align-items: center;
  justify-content: space-between;
  height: 21px;
  padding: 0 5px 2px 3px;
  background: #b9b9b9;
}
.dock-head svg { display: block; width: 8px; height: 8px; stroke: #000; stroke-width: 2; }
.note { padding: 5px; height: 26px; }
.list { flex: 1; border: 1px solid #828790; background: #fff; list-style: none; }
.list li { display: flex; align-items: center; gap: 6px; height: 18px; padding-left: 5px; font-weight: 700; }
.list li::before { content: ""; width: 14px; height: 14px; border-radius: 50%; background: #b9b9b9; }

.dock.filter { flex: none; height: 106px; border: 0; }
.checks {
  display: grid;
  grid-template-columns: 77px auto;
  justify-content: start;
  padding: 5px;
}
.checks .wide { grid-column: 1 / 3; }
.checks label { display: flex; align-items: center; gap: 3px; height: 15px; white-space: nowrap; }
.checks input {
  appearance: none;
  display: grid;
  place-items: center;
  width: 13px;
  height: 13px;
  border-radius: 3px;
  background: #0060b8;
}
.checks input::after {
  content: "";
  width: 7px;
  height: 4px;
  margin-bottom: 2px;
  border: solid #dbe9f6;
  border-width: 0 0 1px 1px;
  transform: rotate(-45deg);
}

/* Vertical toolbars */
.side { display: flex; flex-direction: column; align-items: center; gap: 2px; padding-top: 5px; }
.side button { display: grid; place-items: center; width: 30px; height: 30px; border: 1px solid transparent; }
.side .on { border-color: #0078d7; background: #b3d5f2; }
.side hr { width: 26px; height: 1px; margin: 2px 0 3px; border: 0; background: #8c8c8c; }

.ic-text { font: 700 13px "Open Sans", sans-serif; text-anchor: middle; fill: #545454; }
.ic-text.b { font-size: 14px; }
.ic-text.w { font-size: 10px; fill: #fff; }
.ic-text.v { font-size: 8px; fill: #fff; }
.ic-text.u { font-size: 13px; font-weight: 600; }
.ic-text.l { font-size: 14px; font-weight: 400; }
.ic-text.s { font-size: 12px; font-weight: 400; }
.ic-text.x { font-size: 10px; font-weight: 400; }
.ic-text.i { font-style: italic; }
.dots { stroke: #545454; stroke-width: 3; stroke-linecap: round; }
.span { fill: none; stroke: #545454; stroke-width: 2; }
.axes { stroke: #545454; stroke-width: 2; fill: none; }

/* Schematic */
.canvas { min-width: 0; min-height: 0; border: 1px solid #a3a3a3; background: #f5f4ef; }
.sheet { display: block; width: 100%; height: 100%; }
.sheet text { font-family: Inter, "Open Sans", sans-serif; font-size: 13px; font-weight: 400; }
.wire { fill: none; stroke: #009600; shape-rendering: crispEdges; }
.junction { stroke: #009600; stroke-width: 6; stroke-linecap: round; }
.thin { fill: none; stroke: #840000; shape-rendering: crispEdges; }
.round { fill: none; stroke: #840000; }
.thick { fill: none; stroke: #840000; stroke-width: 2; }
.body { fill: #ffffc2; stroke: #840000; stroke-width: 2; }
.outline { fill: none; stroke: #840000; }
.nc { fill: #c98a88; stroke: #a34040; }
.page { stroke: #848484; fill: none; }
.label { fill: #0f0f0f; }
.name { fill: #006464; }
.num { fill: #a90000; }
.mid { text-anchor: middle; }
.end { text-anchor: end; }
.sheet .sz10 text { font-size: 10px; }
.sheet .sz12 text { font-size: 12px; }
.sheet text.sz15 { font-size: 15px; }

/* Footer */
.message-panel { height: 30px; }
.statusbar {
  display: grid;
  grid-template-columns: 1fr 78px 160px 250px 184px 66px 173px 157px;
  height: 22px;
  border-top: 1px solid #d7d7d7;
}
.statusbar span { padding-left: 4px; line-height: 23px; border-right: 1px solid #d7d7d7; white-space: nowrap; }
.statusbar span:last-child { border-right: 0; }
```
